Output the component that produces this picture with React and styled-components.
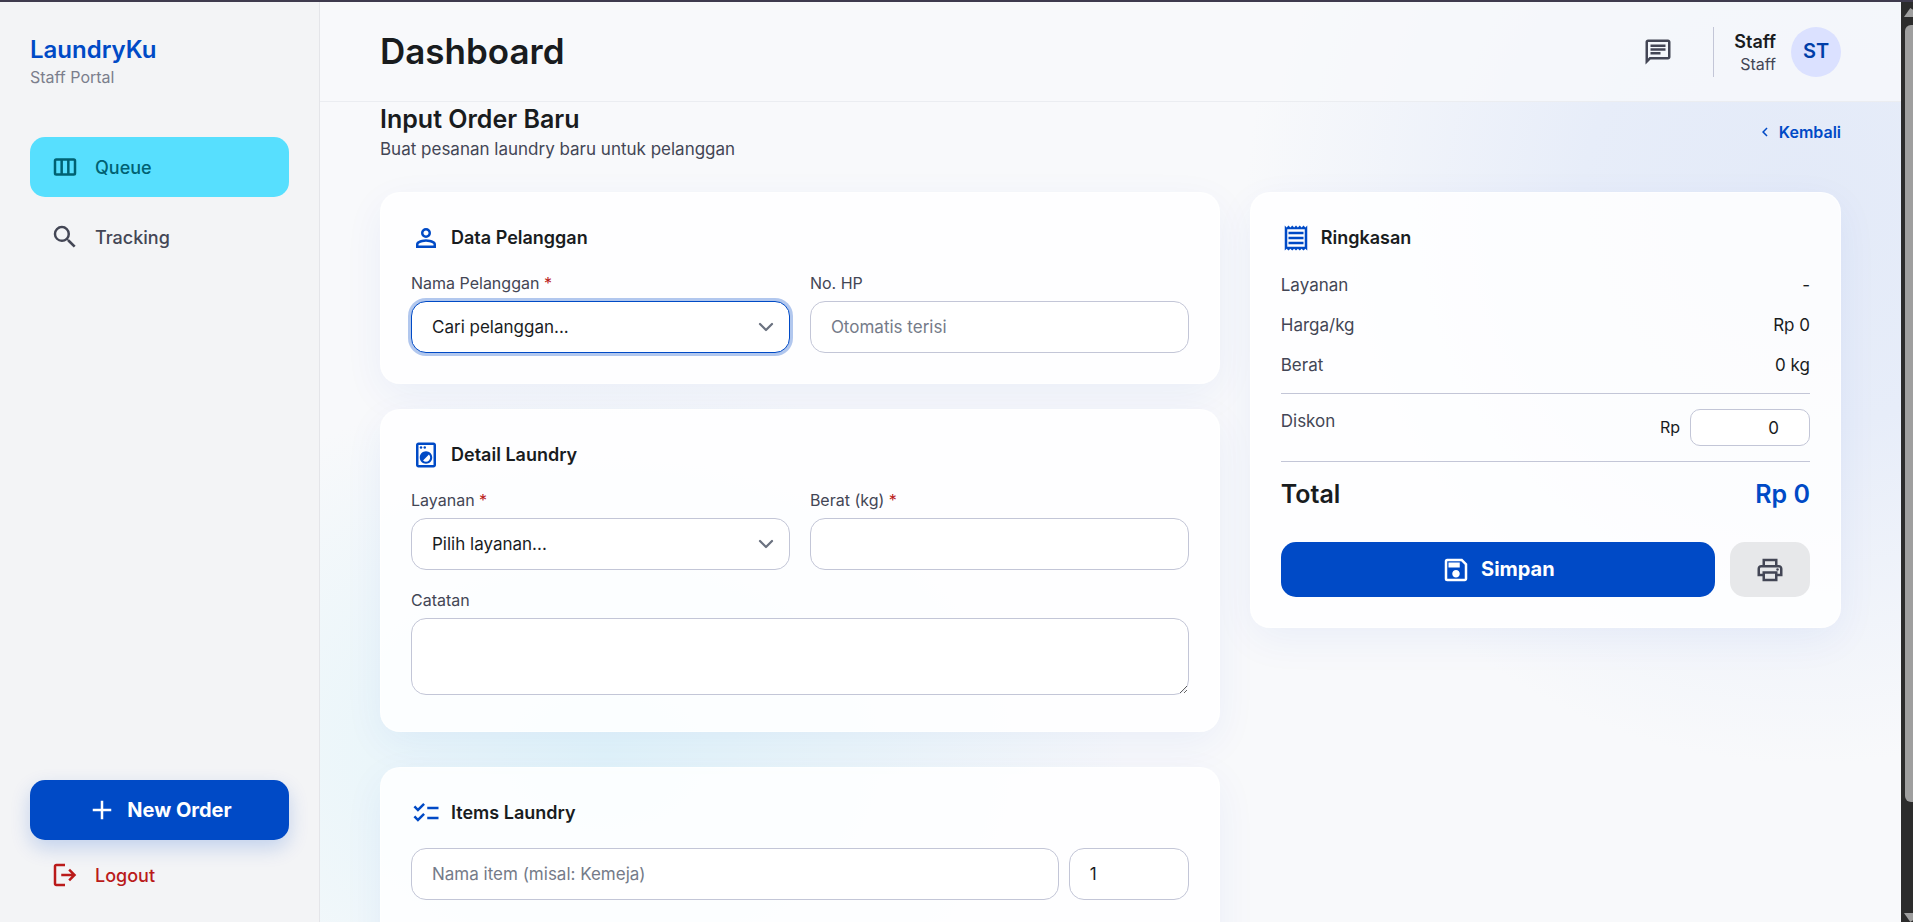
import { useState } from "react";
import styled, { createGlobalStyle } from "styled-components";
import {
    MdSearch,
    MdOutlineChat,
    MdChevronLeft,
    MdOutlineLocalLaundryService,
    MdOutlineReceipt,
    MdOutlineSave,
    MdOutlinePrint,
    MdChecklist
} from "react-icons/md";

export default function App() {
    return (
        <>
            <GlobalStyle />
            <SCShell>
                <Sidebar />
                <SCMain>
                    <Header />
                    <OrderPage />
                </SCMain>
                <SCScrollbar aria-hidden="true">
                    <SCArrow />
                    <SCThumb />
                    <SCArrow $down />
                </SCScrollbar>
            </SCShell>
        </>
    );
}

function Sidebar() {
    return (
        <SCSidebar>
            <SCBrand>
                <h1>LaundryKu</h1>
                <p>Staff Portal</p>
            </SCBrand>
            <SCNav>
                <SCNavLink href="#queue" $active>
                    <QueueIcon /> Queue
                </SCNavLink>
                <SCNavLink href="#tracking">
                    <MdSearch size={30} /> Tracking
                </SCNavLink>
            </SCNav>
            <SCNewOrder type="button">
                <PlusIcon /> New Order
            </SCNewOrder>
            <SCLogout href="#logout">
                <LogoutIcon /> Logout
            </SCLogout>
        </SCSidebar>
    );
}

function Header() {
    return (
        <SCHeader>
            <SCPageTitle>Dashboard</SCPageTitle>
            <SCHeaderRight>
                <SCIconButton type="button" aria-label="Chat">
                    <MdOutlineChat size={30} />
                </SCIconButton>
                <SCProfile>
                    <SCProfileText>
                        <strong>Staff</strong>
                        <span>Staff</span>
                    </SCProfileText>
                    <SCAvatar>ST</SCAvatar>
                </SCProfile>
            </SCHeaderRight>
        </SCHeader>
    );
}

function OrderPage() {
    const [berat, setBerat] = useState("");
    const [catatan, setCatatan] = useState("");
    const [item, setItem] = useState("");
    const [jumlah, setJumlah] = useState(1);

    return (
        <SCContent>
            <SCContentTop>
                <div>
                    <h2>Input Order Baru</h2>
                    <p>Buat pesanan laundry baru untuk pelanggan</p>
                </div>
                <SCBack href="#queue">
                    <MdChevronLeft size={18} /> Kembali
                </SCBack>
            </SCContentTop>
            <SCColumns>
                <SCForm>
                    <SCCard>
                        <SCCardTitle><PersonIcon /> Data Pelanggan</SCCardTitle>
                        <SCFieldRow>
                            <SCField>
                                <label htmlFor="pelanggan">Nama Pelanggan <em>*</em></label>
                                <SCSelect id="pelanggan" $focused>
                                    <option>Cari pelanggan...</option>
                                </SCSelect>
                            </SCField>
                            <SCField>
                                <label htmlFor="hp">No. HP</label>
                                <SCInput id="hp" placeholder="Otomatis terisi" readOnly />
                            </SCField>
                        </SCFieldRow>
                    </SCCard>
                    <SCCard>
                        <SCCardTitle><MdOutlineLocalLaundryService size={30} /> Detail Laundry</SCCardTitle>
                        <SCFieldRow>
                            <SCField>
                                <label htmlFor="layanan">Layanan <em>*</em></label>
                                <SCSelect id="layanan">
                                    <option>Pilih layanan...</option>
                                </SCSelect>
                            </SCField>
                            <SCField>
                                <label htmlFor="berat">Berat (kg) <em>*</em></label>
                                <SCInput id="berat" value={berat} onChange={(e) => setBerat(e.target.value)} />
                            </SCField>
                        </SCFieldRow>
                        <SCNotes>
                            <label htmlFor="catatan">Catatan</label>
                            <SCTextarea id="catatan" value={catatan} onChange={(e) => setCatatan(e.target.value)} />
                        </SCNotes>
                    </SCCard>
                    <SCItemsCard>
                        <SCCardTitle><MdChecklist size={30} /> Items Laundry</SCCardTitle>
                        <SCItemRow>
                            <SCInput
                                aria-label="Nama item"
                                placeholder="Nama item (misal: Kemeja)"
                                value={item}
                                onChange={(e) => setItem(e.target.value)}
                            />
                            <SCInput
                                aria-label="Jumlah"
                                type="number"
                                value={jumlah}
                                onChange={(e) => setJumlah(e.target.value)}
                            />
                        </SCItemRow>
                    </SCItemsCard>
                </SCForm>
                <Summary />
            </SCColumns>
        </SCContent>
    );
}

function Summary() {
    const [diskon, setDiskon] = useState(0);
    const rows = [
        { label: "Layanan", value: "-" },
        { label: "Harga/kg", value: "Rp 0" },
        { label: "Berat", value: "0 kg" }
    ];

    return (
        <SCSummary>
            <SCCardTitle><MdOutlineReceipt size={30} /> Ringkasan</SCCardTitle>
            <SCRows>
                {rows.map((row) =>
                <SCRow key={row.label}>
                    <span>{row.label}</span>
                    <b>{row.value}</b>
                </SCRow>
                )}
            </SCRows>
            <SCDiscountRow>
                <label htmlFor="diskon">Diskon</label>
                <SCDiscount>
                    <span>Rp</span>
                    <SCDiscountInput
                        id="diskon"
                        type="number"
                        value={diskon}
                        onChange={(e) => setDiskon(e.target.value)}
                    />
                </SCDiscount>
            </SCDiscountRow>
            <SCTotal>
                <span>Total</span>
                <b>Rp 0</b>
            </SCTotal>
            <SCActions>
                <SCSave type="button"><MdOutlineSave size={30} /> Simpan</SCSave>
                <SCPrint type="button" aria-label="Cetak"><MdOutlinePrint size={30} /></SCPrint>
            </SCActions>
        </SCSummary>
    );
}

function QueueIcon() {
    return (
        <svg width="30" height="30" viewBox="0 0 24 24" fill="none" stroke="currentColor" strokeWidth="2">
            <rect x="4" y="6" width="16" height="12" rx="1" />
            <path d="M9.33 6v12M14.67 6v12" />
        </svg>
    );
}

function PlusIcon() {
    return (
        <svg width="30" height="30" viewBox="0 0 24 24" fill="none" stroke="currentColor" strokeWidth="2">
            <path d="M12 4.6v14.8M4.6 12h14.8" />
        </svg>
    );
}

function LogoutIcon() {
    return (
        <svg width="30" height="30" viewBox="0 0 24 24" fill="currentColor">
            <path d="m16 17-1.375-1.45 2.55-2.55H9v-2h8.175l-2.55-2.55L16 7l5 5-5 5M5 21q-.825 0-1.412-.587T3 19V5q0-.825.588-1.412T5 3h7v2H5v14h7v2z" />
        </svg>
    );
}

function PersonIcon() {
    return (
        <svg width="30" height="30" viewBox="0 0 24 24" fill="currentColor">
            <path d="M12 12q-1.65 0-2.825-1.175T8 8t1.175-2.825T12 4t2.825 1.175T16 8t-1.175 2.825T12 12m-8 8v-2.8q0-.85.438-1.562T5.6 14.55q1.55-.775 3.15-1.162T12 13t3.25.388t3.15 1.162q.725.375 1.163 1.088T20 17.2V20zm2-2h12v-.8q0-.275-.137-.5t-.363-.35q-1.35-.675-2.725-1.012T12 15t-2.775.338T6.5 16.35q-.225.125-.363.35T6 17.2zm6-8q.825 0 1.413-.587T14 8t-.587-1.412T12 6t-1.412.588T10 8t.588 1.413T12 10" />
        </svg>
    );
}

const GlobalStyle = createGlobalStyle`
    * {
        box-sizing: border-box;
        margin: 0;
        padding: 0;
    }
    body {
        font-family: "Inter", "Liberation Sans", sans-serif;
        font-size: 17px;
        line-height: 25px;
        color: #191c1e;
        background: #f8f9fb;
    }
    button, input, select, textarea {
        font: inherit;
        color: inherit;
    }
    a {
        text-decoration: none;
    }
    svg {
        flex-shrink: 0;
    }
`;

const SCShell = styled.div`
    display: flex;
    height: 100vh;
    overflow: hidden;
    border-top: 2px solid #3f3b4e;
`;

const SCSidebar = styled.aside`
    display: flex;
    flex-direction: column;
    flex-shrink: 0;
    width: 320px;
    padding: 30px 30px 17px;
    background: #f3f4f6;
    border-right: 1px solid #e4e5e9;
`;

const SCBrand = styled.div`
    margin-bottom: 50px;
    h1 {
        font-size: 24px;
        font-weight: 600;
        line-height: 35px;
        color: #004ac6;
    }
    p {
        font-size: 16px;
        line-height: 20px;
        color: #7b7e8c;
    }
`;

const SCNav = styled.nav`
    display: flex;
    flex-direction: column;
    flex: 1;
    gap: 10px;
`;

const SCNavLink = styled.a`
    display: flex;
    align-items: center;
    gap: 15px;
    height: 60px;
    padding: 0 20px;
    border-radius: 15px;
    font-size: 18px;
    font-weight: 500;
    color: ${props => props.$active ? "#006172" : "#434655"};
    background: ${props => props.$active ? "#57dffe" : "transparent"};
`;

const SCLogout = styled(SCNavLink)`
    margin-top: 5px;
    color: #ba1a1a;
`;

const SCNewOrder = styled.button`
    display: flex;
    align-items: center;
    justify-content: center;
    gap: 10px;
    height: 60px;
    border: none;
    border-radius: 15px;
    font-size: 20px;
    font-weight: 700;
    color: #ffffff;
    background: #004ac6;
    box-shadow: 0 8px 20px rgba(0, 74, 198, 0.2);
`;

const SCMain = styled.main`
    flex: 1;
    min-width: 0;
    background:
        radial-gradient(circle 560px at 94% 22%, #e3eaf8 0%, #e7edf9 40%, rgba(248, 249, 251, 0) 100%),
        radial-gradient(ellipse 520px 380px at 18% 82%, #e2f4fa 0%, #ebf6fa 45%, rgba(248, 249, 251, 0) 100%),
        #f8f9fb;
`;

const SCHeader = styled.header`
    display: flex;
    align-items: center;
    justify-content: space-between;
    height: 100px;
    padding: 0 60px;
    background: rgba(248, 249, 251, 0.8);
    border-bottom: 1px solid #ebedf1;
`;

const SCPageTitle = styled.h2`
    font-size: 35px;
    font-weight: 600;
    line-height: 45px;
`;

const SCHeaderRight = styled.div`
    display: flex;
    align-items: center;
    gap: 30px;
`;

const SCIconButton = styled.button`
    display: flex;
    padding: 10px;
    border: none;
    background: none;
    color: #434655;
`;

const SCProfile = styled.div`
    display: flex;
    align-items: center;
    gap: 15px;
    padding-left: 20px;
    border-left: 1px solid #c3c6d7;
`;

const SCProfileText = styled.div`
    display: flex;
    flex-direction: column;
    align-items: flex-end;
    strong {
        font-size: 18px;
        font-weight: 600;
        line-height: 24px;
    }
    span {
        font-size: 16px;
        line-height: 20px;
        color: #434655;
    }
`;

const SCAvatar = styled.div`
    display: flex;
    align-items: center;
    justify-content: center;
    width: 50px;
    height: 50px;
    border-radius: 50%;
    font-size: 20px;
    font-weight: 600;
    color: #003ea8;
    background: #dbe1ff;
`;

const SCContent = styled.section`
    padding: 0 60px 60px;
`;

const SCContentTop = styled.div`
    display: flex;
    align-items: center;
    justify-content: space-between;
    margin-bottom: 30px;
    h2 {
        font-size: 25px;
        font-weight: 600;
        line-height: 35px;
    }
    p {
        color: #434655;
    }
`;

const SCBack = styled.a`
    display: flex;
    align-items: center;
    gap: 5px;
    font-size: 16px;
    font-weight: 600;
    color: #004ac6;
`;

const SCColumns = styled.div`
    display: grid;
    grid-template-columns: repeat(12, 1fr);
    align-items: start;
    gap: 30px;
`;

const SCForm = styled.form`
    display: flex;
    flex-direction: column;
    grid-column: span 7;
    gap: 25px;
`;

const SCCard = styled.section`
    padding: 30px;
    border: 1px solid rgba(255, 255, 255, 0.6);
    border-radius: 20px;
    background: rgba(255, 255, 255, 0.85);
    box-shadow: 0 12px 40px rgba(0, 74, 198, 0.06);
`;

const SCItemsCard = styled(SCCard)`
    margin-top: 10px;
    padding-bottom: 60px;
`;

const SCSummary = styled(SCCard)`
    grid-column: span 5;
`;

const SCCardTitle = styled.h3`
    display: flex;
    align-items: center;
    gap: 10px;
    margin-bottom: 20px;
    font-size: 18px;
    font-weight: 600;
    line-height: 30px;
    svg {
        color: #004ac6;
    }
`;

const SCFieldRow = styled.div`
    display: grid;
    grid-template-columns: 1fr 1fr;
    gap: 20px;
`;

const SCField = styled.div`
    display: flex;
    flex-direction: column;
    gap: 8px;
    label {
        font-size: 16px;
        line-height: 20px;
        color: #434655;
    }
    em {
        font-style: normal;
        color: #ba1a1a;
    }
`;

const SCNotes = styled(SCField)`
    margin-top: 20px;
    padding-bottom: 6px;
`;

const SCInput = styled.input`
    width: 100%;
    height: 52px;
    padding: 0 20px;
    border: 1px solid #c3c6d7;
    border-radius: 15px;
    outline: none;
    background: #ffffff;
    &::placeholder {
        color: #757b89;
    }
`;

const SCSelect = styled.select`
    appearance: none;
    width: 100%;
    height: 52px;
    padding: 0 50px 0 20px;
    border: 1px solid ${props => props.$focused ? "#004ac6" : "#c3c6d7"};
    border-radius: 15px;
    outline: none;
    box-shadow: ${props => props.$focused ? "0 0 0 3px rgba(0, 74, 198, 0.3)" : "none"};
    background: #ffffff url("data:image/svg+xml,%3Csvg xmlns='http://www.w3.org/2000/svg' fill='none' viewBox='0 0 20 20'%3E%3Cpath stroke='%236b7280' stroke-linecap='round' stroke-linejoin='round' stroke-width='1.5' d='m6 8 4 4 4-4'/%3E%3C/svg%3E") no-repeat right 8px center / 30px 30px;
`;

const SCTextarea = styled.textarea`
    display: block;
    width: 100%;
    height: 77px;
    padding: 12px 20px;
    border: 1px solid #c3c6d7;
    border-radius: 15px;
    outline: none;
    background: #ffffff;
    resize: vertical;
`;

const SCItemRow = styled.div`
    display: grid;
    grid-template-columns: 1fr 120px;
    gap: 10px;
`;

const SCRows = styled.div`
    display: flex;
    flex-direction: column;
    gap: 15px;
    margin-bottom: 15px;
`;

const SCRow = styled.div`
    display: flex;
    justify-content: space-between;
    span {
        color: #434655;
    }
    b {
        font-weight: 400;
    }
`;

const SCDiscountRow = styled.div`
    display: flex;
    align-items: flex-start;
    justify-content: space-between;
    padding: 15px 0;
    border: 1px solid #c3c6d7;
    border-width: 1px 0;
    label {
        color: #434655;
    }
`;

const SCDiscount = styled.div`
    display: flex;
    align-items: center;
    gap: 10px;
    span {
        font-size: 16px;
    }
`;

const SCDiscountInput = styled(SCInput)`
    width: 120px;
    height: 37px;
    padding: 0 15px;
    border-radius: 10px;
    text-align: right;
`;

const SCTotal = styled.div`
    display: flex;
    justify-content: space-between;
    margin: 15px 0 30px;
    font-size: 25px;
    font-weight: 600;
    line-height: 35px;
    b {
        font-weight: 600;
        color: #004ac6;
    }
`;

const SCActions = styled.div`
    display: flex;
    gap: 15px;
`;

const SCSave = styled.button`
    display: flex;
    flex: 1;
    align-items: center;
    justify-content: center;
    gap: 10px;
    height: 55px;
    border: none;
    border-radius: 15px;
    font-size: 20px;
    font-weight: 700;
    color: #ffffff;
    background: #004ac6;
`;

const SCPrint = styled.button`
    display: flex;
    align-items: center;
    justify-content: center;
    width: 80px;
    height: 55px;
    border: none;
    border-radius: 15px;
    color: #434655;
    background: #e7e8ea;
`;

const SCScrollbar = styled.div`
    display: flex;
    flex-direction: column;
    flex-shrink: 0;
    align-items: flex-end;
    width: 12px;
    padding-top: 6px;
    overflow: hidden;
    background: #2c2c2c;
`;

const SCArrow = styled.div`
    width: 9px;
    height: 9px;
    background: #9f9f9f;
    clip-path: ${props => props.$down ? "polygon(0 0, 100% 0, 100% 80%, 70% 100%)" : "polygon(0 100%, 70% 0, 100% 20%, 100% 100%)"};
`;

const SCThumb = styled.div`
    width: 8px;
    height: 85%;
    margin: 8px 0 auto;
    border-radius: 6px 0 0 6px;
    background: #9f9f9f;
`;
